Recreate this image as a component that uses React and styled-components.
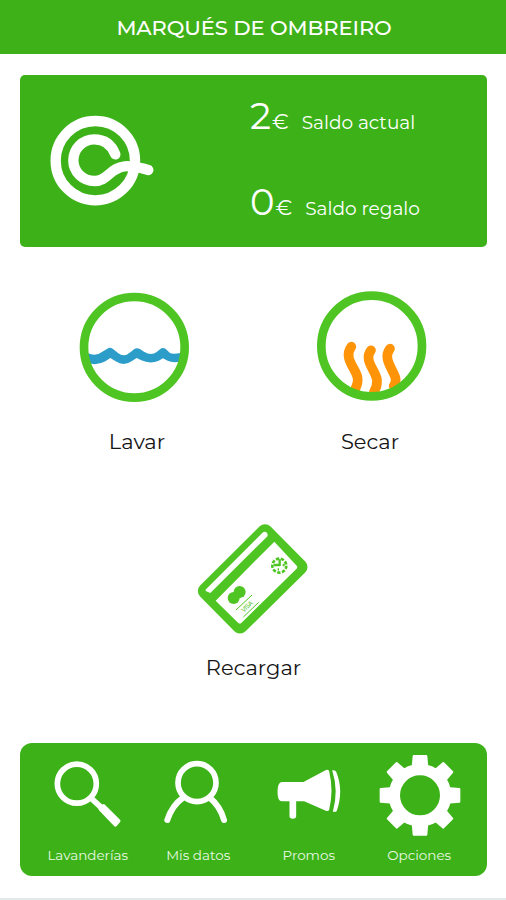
import React from 'react'
import styled, { createGlobalStyle } from 'styled-components'

const GlobalStyle = createGlobalStyle`
  * {
    box-sizing: border-box;
  }

  body {
    margin: 0;
    background: #fff;
    font-family: Montserrat, Inter, sans-serif;
    color: #161616;
  }
`;

const LogoIcon = () => (
  <Logo viewBox="0 0 450 390" fill="none" stroke="#fff" strokeLinecap="round">
    <circle cx="196" cy="212" r="119" strokeWidth="31" />
    <path d="M256 193 C243 160 222 148 193 148 C157 148 130 177 130 211 C130 246 158 273 194 273 C234 273 240 233 284 229 C315 226 332 234 355 240" strokeWidth="31" />
  </Logo>
)

const WashIcon = () => (
  <ActionIcon viewBox="27 36 333 333">
    <path d="M54 220 Q78 230 97 215 L112 206 Q120 200 129 207 L144 219 Q162 234 181 217 L193 207 Q201 202 211 208 L222 215 Q244 229 260 216 L271 207 Q279 201 288 208 L300 219 Q308 223 332 219 V245 Q306 249 293 242 L279 235 L266 242 Q241 253 214 241 L200 234 L186 243 Q162 260 137 244 L121 234 L106 244 Q84 257 54 250 Z" fill="#2c9dc8" />
    <circle cx="193" cy="202" r="151" fill="none" stroke="#4ec522" strokeWidth="26" />
  </ActionIcon>
)

const DryIcon = () => (
  <ActionIcon viewBox="30 36 333 333">
    <g fill="none" stroke="#ff9408" strokeWidth="29" strokeLinecap="round">
      <path d="M136 200 C112 232 146 262 154 290 Q158 307 148 326" />
      <path d="M195 211 C172 240 208 270 213 300 Q214 320 204 335" />
      <path d="M252 206 C230 235 258 263 268 292 Q272 306 263 318" />
    </g>
    <circle cx="197" cy="198" r="151" fill="none" stroke="#4ec522" strokeWidth="26" />
  </ActionIcon>
)

const CardIcon = () => (
  <ActionIcon viewBox="36 39 333 333">
    <path d="M240 66 L344 171 L165 347 L62 243 Z" fill="#4ec522" stroke="#4ec522" strokeWidth="47" strokeLinejoin="round" />
    <path d="M63 238 L234 67 Q241 63 246 69 Q250 75 246 80 L76 249 L62 243 Z" fill="#fff" />
    <path d="M92 272 L268 95 L335 167 Q339 172 334 177 L169 339 Q164 343 159 338 Z" fill="#fff" />
    <g fill="#4ec522">
      <circle cx="146" cy="264" r="18" />
      <circle cx="164" cy="246" r="18" />
    </g>
    <path d="M153 300 L201 255 M175 321 L221 277" stroke="#4ec522" strokeWidth="3" />
    <text x="176" y="308" transform="rotate(-43 176 308)" fill="#4ec522" fontSize="19" fontFamily="Inter" textLength="40">VISA</text>
    <circle cx="283" cy="167" r="21" fill="none" stroke="#4ec522" strokeWidth="8" strokeDasharray="10 4.66" />
    <path d="M266 165 H285 M284 148 V168 M293 165 H299 M278 178 H282" fill="none" stroke="#4ec522" strokeWidth="7" />
  </ActionIcon>
)

const SearchIcon = () => (
  <TabIcon viewBox="67.5 60 331.5 264" fill="none" stroke="#fff">
    <circle cx="199" cy="146" r="58.5" strokeWidth="17" />
    <path d="M239 187 L275 220" strokeWidth="17" />
    <path d="M269 222 L279 212 L325 258 L315 270 Z" fill="#fff" strokeWidth="10" strokeLinejoin="round" />
  </TabIcon>
)

const UserIcon = () => (
  <TabIcon viewBox="399 60 331.5 264" fill="none" stroke="#fff" strokeLinecap="round">
    <circle cx="561" cy="143" r="57" strokeWidth="17" />
    <path d="M519 188 Q486 211 472 255 M599 188 Q630 213 642 255" strokeWidth="18" />
  </TabIcon>
)

const MegaphoneIcon = () => (
  <TabIcon viewBox="10.5 60 331.5 264" fill="#fff">
    <path d="M95 141 H159 L225 106 Q233 102 236 109 Q250 168 236 224 Q234 230 226 227 L161 199 H137 V244 Q137 251 127 251 Q117 251 117 244 V199 H94 Q81 199 81 170 Q81 141 95 141 Z" />
    <path d="M245 106 Q254 104 257 110 Q280 165 259 227 Q256 232 247 230 Q265 168 245 106 Z" />
  </TabIcon>
)

const GearIcon = () => (
  <TabIcon viewBox="342 60 331.5 264">
    <g fill="#fff" stroke="#fff" strokeWidth="6" strokeLinejoin="round">
      {[0, 45, 90, 135, 180, 225, 270, 315].map((angle) => (
        <path key={angle} d="M487 110 L491 63 H529 L533 110 Z" transform={`rotate(${angle} 510 181)`} />
      ))}
    </g>
    <circle cx="510" cy="181" r="77" fill="none" stroke="#fff" strokeWidth="34" />
  </TabIcon>
)

const balances = [
  { amount: 2, label: 'Saldo actual' },
  { amount: 0, label: 'Saldo regalo' },
]

const tabs = [
  { label: 'Lavanderías', icon: <SearchIcon /> },
  { label: 'Mis datos', icon: <UserIcon /> },
  { label: 'Promos', icon: <MegaphoneIcon /> },
  { label: 'Opciones', icon: <GearIcon /> },
]

const App = () => {
  return (
    <Screen>
      <GlobalStyle />
      <Header>
        <Title>MARQUÉS DE OMBREIRO</Title>
      </Header>
      <BalanceCard>
        <LogoIcon />
        <Balances>
          {balances.map((item) => (
            <Balance key={item.label}>
              <Amount>{item.amount}</Amount>
              <Currency>€</Currency>
              <BalanceLabel>{item.label}</BalanceLabel>
            </Balance>
          ))}
        </Balances>
      </BalanceCard>
      <Actions>
        <Action>
          <WashIcon />
          <ActionLabel $indent={5}>Lavar</ActionLabel>
        </Action>
        <Action>
          <DryIcon />
          <ActionLabel $indent={-3}>Secar</ActionLabel>
        </Action>
      </Actions>
      <Recharge>
        <CardIcon />
        <ActionLabel $indent={2}>Recargar</ActionLabel>
      </Recharge>
      <TabBar>
        {tabs.map((tab) => (
          <Tab key={tab.label}>
            {tab.icon}
            <TabLabel>{tab.label}</TabLabel>
          </Tab>
        ))}
      </TabBar>
    </Screen>
  )
}

const Screen = styled.div`
  display: flex;
  flex-direction: column;
  width: 506px;
  height: 900px;
  background: #fff;
  border-bottom: 2px solid #e3e8e8;
  overflow: hidden;
`;

const Header = styled.header`
  display: flex;
  justify-content: center;
  align-items: center;
  height: 54px;
  padding-left: 2px;
  background: #3fb118;
`;

const Title = styled.h1`
  margin: 2px 0 0;
  font-size: 21px;
  font-weight: 500;
  line-height: 26px;
  letter-spacing: -0.1px;
  color: #fff;
  white-space: nowrap;
`;

const BalanceCard = styled.section`
  display: flex;
  height: 172px;
  margin: 21px 19px 0 20px;
  padding: 15px 0 0 10px;
  border-radius: 5px;
  background: #3cb218;
  color: #fff;
`;

const Logo = styled.svg`
  width: 150px;
  height: 130px;
`;

const Balances = styled.div`
  display: flex;
  flex-direction: column;
  row-gap: 42px;
  margin-left: 70px;
  padding-top: 4px;
`;

const Balance = styled.div`
  display: flex;
  align-items: baseline;
  height: 44px;
  line-height: 44px;
  white-space: nowrap;
`;

const Amount = styled.span`
  font-size: 37px;
  font-weight: 400;
`;

const Currency = styled.span`
  margin-left: 1px;
  font-size: 21px;
`;

const BalanceLabel = styled.span`
  margin-left: 13px;
  font-size: 18.5px;
`;

const Actions = styled.div`
  display: flex;
  column-gap: 126px;
  margin-top: 45px;
  padding-left: 79px;
`;

const Action = styled.div`
  display: flex;
  flex-direction: column;
  align-items: center;
  width: 111px;
`;

const ActionIcon = styled.svg`
  width: 111px;
  height: 111px;
  overflow: visible;
`;

const ActionLabel = styled.span`
  margin: 26px 0 0 ${(props) => props.$indent}px;
  font-size: 21px;
  line-height: 26px;
`;

const Recharge = styled(Action)`
  margin: 68px 0 0 197px;

  ${ActionLabel} {
    margin-top: 21px;
  }
`;

const TabBar = styled.nav`
  display: flex;
  height: 133px;
  margin: 62px 19px 0 20px;
  padding: 12px 0 0 12.5px;
  border-radius: 12px;
  background: #3cb218;
`;

const Tab = styled.div`
  display: flex;
  flex-direction: column;
  align-items: center;
  width: 110.5px;
`;

const TabIcon = styled.svg`
  width: 110.5px;
  height: 88px;
`;

const TabLabel = styled.span`
  margin-top: 4px;
  font-size: 13.5px;
  line-height: 16px;
  color: #e9f8e3;
`;

export default App
